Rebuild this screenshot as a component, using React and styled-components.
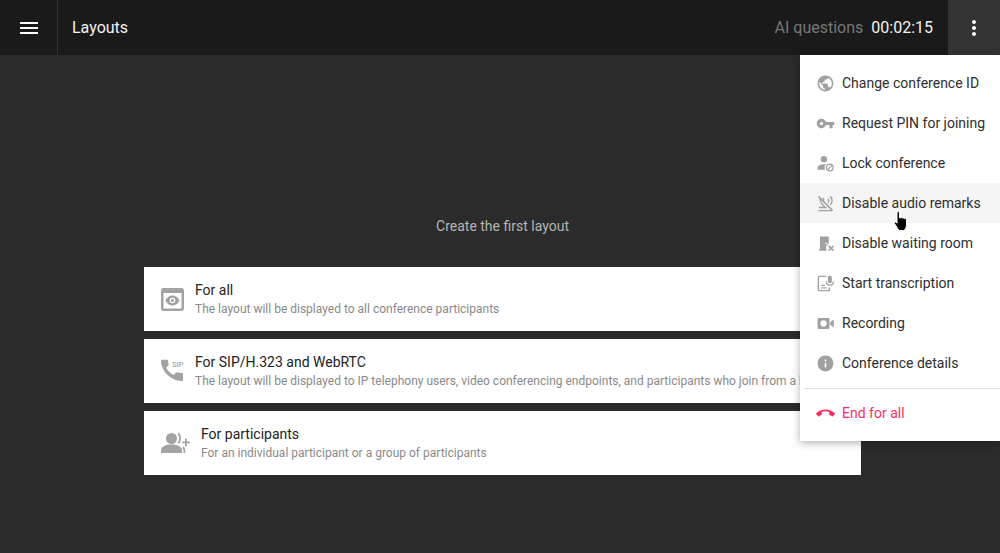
import React from "react";
import styled, { createGlobalStyle } from "styled-components";

const GlobalStyle = createGlobalStyle`
  html, body {
    margin: 0;
    height: 100%;
    background: #2b2b2b;
    font-family: Roboto, "Liberation Sans", sans-serif;
  }
  * { box-sizing: border-box; }
`;

const Page = styled.div`
  position: relative;
  width: 1000px;
  height: 553px;
  overflow: hidden;
  background: #2b2b2b;
`;

const Header = styled.header`
  display: flex;
  align-items: center;
  height: 55px;
  background: #1a1a1a;
`;

const BurgerButton = styled.div`
  display: flex;
  align-items: center;
  justify-content: center;
  width: 58px;
  height: 100%;
  border-right: 1px solid #333;
  color: #fff;
`;

const HeaderTitle = styled.div`
  flex: 1;
  padding-left: 14px;
  font-size: 16px;
  color: #f2f2f2;
`;

const Questions = styled.div`
  font-size: 16px;
  color: #777;
  margin-right: 8px;
`;

const Timer = styled.div`
  font-size: 16px;
  color: #f2f2f2;
  margin-right: 15px;
`;

const MoreButton = styled.div`
  display: flex;
  align-items: center;
  justify-content: center;
  width: 52px;
  height: 100%;
  background: #333;
  color: #fff;
`;

const Content = styled.main`
  width: 717px;
  margin-left: 144px;
  padding-top: 162px;
`;

const EmptyTitle = styled.div`
  height: 50px;
  font-size: 14px;
  line-height: 18px;
  text-align: center;
  color: #b5b5b5;
`;

const CardList = styled.div`
  display: flex;
  flex-direction: column;
  gap: 8px;
`;

const Card = styled.div`
  display: flex;
  align-items: center;
  gap: 11px;
  height: 64px;
  padding-left: 17px;
  background: #fff;
`;

const CardIcon = styled.svg`
  flex: none;
  width: ${(p) => p.$w}px;
  height: 24px;
  color: #a3a3a3;
`;

const CardText = styled.div`
  min-width: 0;
  flex: 1;
`;

const CardTitle = styled.div`
  font-size: 14px;
  line-height: 18px;
  color: #222;
`;

const CardDescription = styled.div`
  margin-top: 2px;
  font-size: 12px;
  line-height: 16px;
  color: #8a8a8a;
  white-space: nowrap;
  overflow: hidden;
`;

const Menu = styled.nav`
  position: absolute;
  top: 55px;
  right: 0;
  width: 200px;
  padding: 8px 0;
  background: #fff;
  box-shadow: 0 2px 8px rgba(0, 0, 0, 0.3);
`;

const MenuItem = styled.div`
  position: relative;
  display: flex;
  align-items: center;
  gap: 7px;
  height: 40px;
  padding-left: 16px;
  font-size: 14px;
  white-space: nowrap;
  color: ${(p) => (p.$danger ? "#ff2d5f" : "#2e2e2e")};
  background: ${(p) => (p.$hover ? "#f5f5f5" : "transparent")};
`;

const MenuIcon = styled.svg`
  flex: none;
  width: 19px;
  height: 19px;
  color: ${(p) => (p.$danger ? "#ff2d5f" : "#a0a0a0")};
`;

const Divider = styled.div`
  height: 1px;
  margin: 5px 0 4px 4px;
  background: #ddd;
`;

const Cursor = styled.svg`
  position: absolute;
  left: 93px;
  top: 28px;
  width: 16px;
  height: 21px;
`;

const icons = {
  globe: (
    <path d="M12 2C6.48 2 2 6.48 2 12s4.48 10 10 10 10-4.48 10-10S17.52 2 12 2zm-1 17.93c-3.95-.49-7-3.85-7-7.93 0-.62.08-1.21.21-1.79L9 15v1c0 1.1.9 2 2 2v1.93zm6.9-2.54c-.26-.81-1-1.39-1.9-1.39h-1v-3c0-.55-.45-1-1-1H8v-2h2c.55 0 1-.45 1-1V7h2c1.1 0 2-.9 2-2v-.41c2.93 1.19 5 4.06 5 7.41 0 2.08-.8 3.97-2.1 5.39z" />
  ),
  key: (
    <path d="M12.65 10C11.83 7.67 9.61 6 7 6c-3.31 0-6 2.69-6 6s2.69 6 6 6c2.61 0 4.83-1.67 5.65-4H17v4h4v-4h2v-4H12.65zM7 14c-1.1 0-2-.9-2-2s.9-2 2-2 2 .9 2 2-.9 2-2 2z" />
  ),
  lock: (
    <>
      <circle cx="10" cy="6.5" r="4" />
      <path d="M2 20v-2.5C2 15 6 13 10 13c.8 0 1.6.1 2.3.2-.9 1-1.5 2.3-1.5 3.8 0 1.1.3 2.1.8 3H2z" />
      <circle cx="17.5" cy="17" r="4.2" fill="none" stroke="currentColor" strokeWidth="1.6" />
      <path d="M14.8 19.8l5.4-5.6" stroke="currentColor" strokeWidth="1.5" />
    </>
  ),
  audioOff: (
    <>
      <path d="M3 3l18 18" stroke="currentColor" strokeWidth="1.8" fill="none" />
      <path
        d="M5 6c.6 4 3 8 7 11H3.5M9 5c1 1.5 1 2.5.2 4M3 21h17"
        stroke="currentColor"
        strokeWidth="1.8"
        fill="none"
      />
      <path
        d="M15 6c1.5 1.2 1.5 3.8 0 5M18 3c3 2.8 3 8 0 11"
        stroke="currentColor"
        strokeWidth="1.8"
        fill="none"
      />
    </>
  ),
  door: (
    <>
      <path d="M4 21v-2h1V3h11v9.5c-2 .6-3.5 2.6-3.5 4.8 0 1.4.5 2.7 1.4 3.7H4zm8-10v2h2v-2h-2z" />
      <path d="M16 14l6 6M22 14l-6 6" stroke="currentColor" strokeWidth="1.8" fill="none" transform="translate(0 1) scale(1)" />
    </>
  ),
  transcript: (
    <>
      <path
        d="M13 3H4.5C3.7 3 3 3.7 3 4.5v15c0 .8.7 1.5 1.5 1.5h11c.8 0 1.5-.7 1.5-1.5V17"
        stroke="currentColor"
        strokeWidth="1.8"
        fill="none"
      />
      <path d="M6.5 13.5h5v1.6h-5zM6.5 16.8h7v1.6h-7z" />
      <rect x="15" y="2" width="5" height="9.5" rx="2.5" />
      <path d="M13 9.5c0 3 2 4.5 4.5 4.5s4.500-1.500 4.500-4.500" stroke="currentColor" strokeWidth="1.600" fill="none" />
    </>
  ),
  record: (
    <path
      fillRule="evenodd"
      d="M3.500 5h12c.800 0 1.500.700 1.500 1.500v11c0 .800-.700 1.500-1.500 1.500h-12C2.700 19 2 18.300 2 17.500v-11C2 5.700 2.700 5 3.500 5zM9.500 8a4 4 0 100 8 4 4 0 000-8zM18 10.500L22.500 7v10L18 13.500z"
    />
  ),
  info: (
    <path d="M12 2C6.48 2 2 6.48 2 12s4.48 10 10 10 10-4.48 10-10S17.52 2 12 2zm1 15h-2v-6h2v6zm0-8h-2V7h2v2z" />
  ),
  end: (
    <path d="M12 9c-1.6 0-3.15.25-4.6.72v3.1c0 .39-.23.74-.56.9-.98.49-1.87 1.12-2.66 1.85-.18.18-.43.28-.7.28-.28 0-.53-.11-.71-.29L.29 13.08c-.18-.17-.29-.42-.29-.7 0-.28.11-.53.29-.71C3.34 8.78 7.46 7 12 7s8.660 1.780 11.710 4.670c.18.18.29.43.29.71 0 .28-.11.53-.29.71l-2.480 2.480c-.18.18-.43.29-.71.29-.27 0-.52-.11-.7-.28-.79-.74-1.690-1.360-2.670-1.850-.33-.16-.56-.5-.56-.9v-3.100C15.150 9.250 13.600 9 12 9z" />
  ),
};

const menuItems = [
  { icon: "globe", label: "Change conference ID" },
  { icon: "key", label: "Request PIN for joining" },
  { icon: "lock", label: "Lock conference" },
  { icon: "audioOff", label: "Disable audio remarks", hover: true },
  { icon: "door", label: "Disable waiting room" },
  { icon: "transcript", label: "Start transcription" },
  { icon: "record", label: "Recording" },
  { icon: "info", label: "Conference details" },
];

const HandCursor = () => (
  <Cursor viewBox="0 0 16 21">
    <path
      d="M4 1.500c0-1 2.500-1 2.500 0V7l1-.2c.5-.5 1.800-.4 2 .3.6-.4 1.700-.2 2 .5.800-.3 1.900.1 2 1.100V14c0 2.500-1.500 5.500-3 5.500H7c-1.500 0-2-1.500-3-3L1.500 12.500c-.6-1 .5-2.200 1.500-1.300l1 1z"
      fill="#000"
      stroke="#fff"
      strokeWidth="1"
    />
  </Cursor>
);

const App = () => (
  <Page>
    <GlobalStyle />
    <Header>
      <BurgerButton>
        <svg width="24" height="24" viewBox="0 0 24 24" fill="currentColor">
          <path d="M3 18h18v-2H3v2zm0-5h18v-2H3v2zm0-7v2h18V6H3z" />
        </svg>
      </BurgerButton>
      <HeaderTitle>Layouts</HeaderTitle>
      <Questions>AI questions</Questions>
      <Timer>00:02:15</Timer>
      <MoreButton>
        <svg width="24" height="24" viewBox="0 0 24 24" fill="currentColor">
          <path d="M12 8c1.100 0 2-.9 2-2s-.9-2-2-2-2 .9-2 2 .9 2 2 2zm0 2c-1.100 0-2 .9-2 2s.9 2 2 2 2-.9 2-2-.9-2-2-2zm0 6c-1.100 0-2 .9-2 2s.9 2 2 2 2-.9 2-2-.9-2-2-2z" />
        </svg>
      </MoreButton>
    </Header>

    <Content>
      <EmptyTitle>Create the first layout</EmptyTitle>
      <CardList>
        <Card>
          <CardIcon $w={23} viewBox="0 0 23 24" fill="currentColor">
            <path
              fillRule="evenodd"
              d="M2.500 1h18C21.900 1 23 2.100 23 3.500v18c0 1.400-1.100 2.500-2.500 2.500h-18C1.100 24 0 22.900 0 21.500v-18C0 2.100 1.100 1 2.500 1zM2.500 6v15.500h18V6z"
            />
            <path
              fillRule="evenodd"
              d="M11.500 8.500c3.500 0 6 2.500 7 5-1 2.500-3.500 5-7 5s-6-2.500-7-5c1-2.500 3.500-5 7-5zm0 2.200a2.800 2.800 0 100 5.600 2.800 2.800 0 000-5.600zm0 1.300a1.500 1.500 0 110 3 1.500 1.500 0 010-3z"
            />
          </CardIcon>
          <CardText>
            <CardTitle>For all</CardTitle>
            <CardDescription>The layout will be displayed to all conference participants</CardDescription>
          </CardText>
        </Card>
        <Card>
          <CardIcon $w={23} viewBox="0 0 23 24" fill="currentColor">
            <path d="M5.200 8.500c1.300 3.200 4 5.900 7.400 7.400l2.300-2.300c.3-.3.700-.4 1.100-.3 1.200.4 3 .8 4.500.8.600 0 1.500.4 1.500 1v5.800c0 .6-.5 1.100-1.100 1.100C10 22 0 12 0 1.800 0 1.200.5.700 1.100.700h5c.6 0 1 .5 1 1.100 0 1.300.2 2.400.6 3.600.1.400 0 .8-.3 1.100z" />
            <text x="11" y="7.500" fontFamily="Roboto, sans-serif" fontSize="7.500" fontWeight="500">SIP</text>
          </CardIcon>
          <CardText>
            <CardTitle>For SIP/H.323 and WebRTC</CardTitle>
            <CardDescription>
              The layout will be displayed to IP telephony users, video conferencing endpoints, and participants who join from a browser
            </CardDescription>
          </CardText>
        </Card>
        <Card>
          <CardIcon $w={29} viewBox="0 0 29 24" fill="currentColor">
            <circle cx="10.500" cy="7.500" r="5.500" />
            <path d="M0 22v-3c0-3.500 5-5.500 10.500-5.500S21 15.500 21 19v3z" />
            <path d="M17 2.500c2.600 1.400 2.800 8 0 9.500M22 16c1 1 1.500 3 1.500 6" stroke="currentColor" strokeWidth="1.800" fill="none" />
            <path d="M24 7.500h1.800v3h3v1.800h-3v3H24v-3h-3v-1.800h3z" />
          </CardIcon>
          <CardText>
            <CardTitle>For participants</CardTitle>
            <CardDescription>For an individual participant or a group of participants</CardDescription>
          </CardText>
        </Card>
      </CardList>
    </Content>

    <Menu>
      {menuItems.map((item) => (
        <MenuItem key={item.label} $hover={item.hover}>
          <MenuIcon viewBox="0 0 24 24" fill="currentColor">
            {icons[item.icon]}
          </MenuIcon>
          {item.label}
          {item.hover && <HandCursor />}
        </MenuItem>
      ))}
      <Divider />
      <MenuItem $danger>
        <MenuIcon $danger viewBox="0 0 24 24" fill="currentColor">
          {icons.end}
        </MenuIcon>
        End for all
      </MenuItem>
    </Menu>
  </Page>
);

export default App;
